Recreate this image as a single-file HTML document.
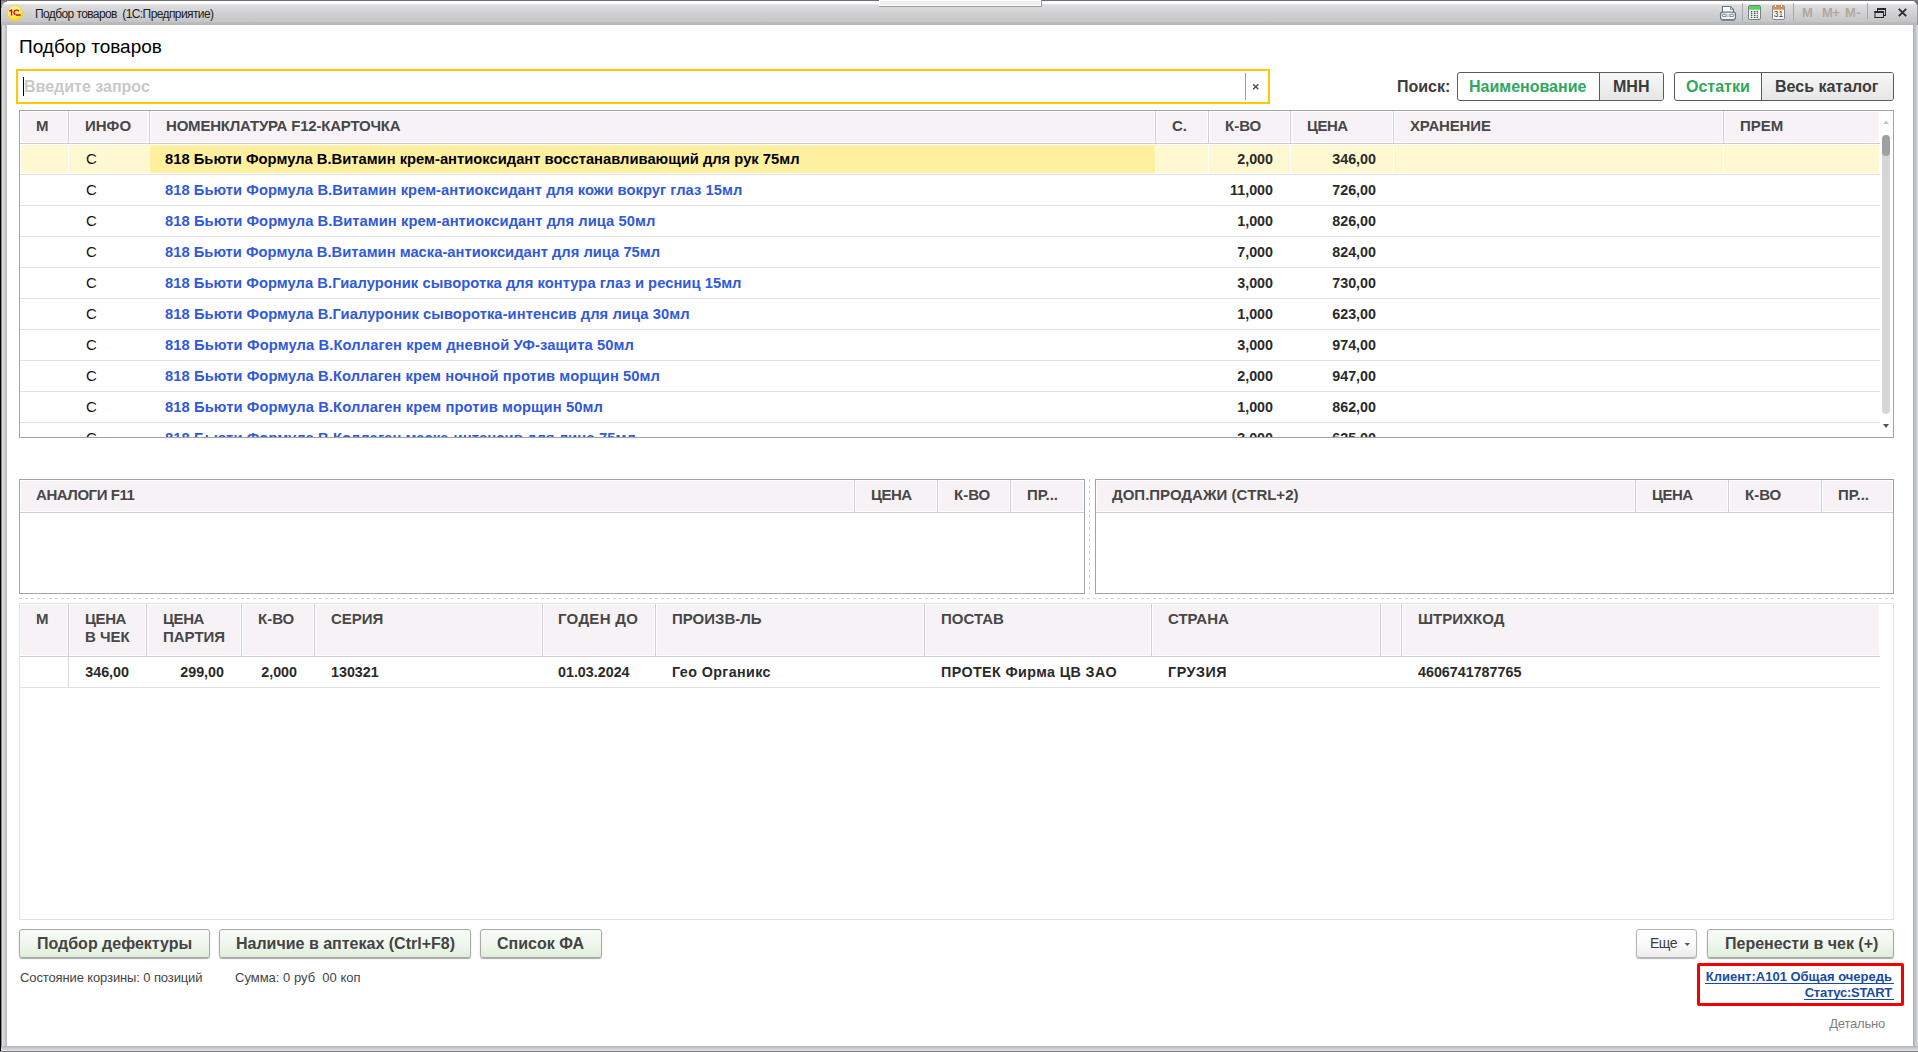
<!DOCTYPE html>
<html><head><meta charset="utf-8"><style>
html,body{margin:0;padding:0;width:1918px;height:1052px;overflow:hidden;background:#fff;position:relative}
.t{position:absolute;white-space:pre;font-family:"Liberation Sans",sans-serif}
</style></head><body>
<div style='position:absolute;left:0px;top:0px;width:1918px;height:25px;background:linear-gradient(#ffffff 0px,#ffffff 4px,#e6e6e8 4px,#dcdcde 6px,#d6d6d8 10px,#d0d0d2 14px,#cbcbcd 18px,#c6c6c8 22px,#b9bcbe 22px,#b8bbbd 25px);'></div><div style='position:absolute;left:0px;top:0px;width:1918px;height:1px;background:#6e6c70;'></div><div style='position:absolute;left:0px;top:0px;width:1px;height:1052px;background:#000;'></div><div style='position:absolute;left:1px;top:25px;width:6px;height:1021px;background:linear-gradient(90deg,#8a8a8a 0,#8a8a8a 1px,#e0e0e0 1px,#e0e0e0 2px,#d4d2d6 2px,#d4d2d6 4px,#c4c6cc 4px,#bcbcbc 6px);'></div><div style='position:absolute;left:1913px;top:25px;width:5px;height:1021px;background:linear-gradient(90deg,#a8abb0 0,#bfc2c6 2px,#d2d4d8 4px,#e0e2e4 5px);'></div><div style='position:absolute;left:1px;top:1046px;width:1917px;height:5px;background:linear-gradient(#b4b4b8 0,#c4c8cc 2px,#d8dadc 4px,#e4e4e4 5px);'></div><div style='position:absolute;left:0px;top:1051px;width:1918px;height:1px;background:#7a787c;'></div><div style='position:absolute;left:879px;top:0px;width:163px;height:7px;background:#fff;'></div><div style='position:absolute;left:880px;top:1px;width:160px;height:4px;background:#eeeeee;'></div><div style='position:absolute;left:1041px;top:0px;width:1px;height:7px;background:#9c9c9c;'></div><div style='position:absolute;left:879px;top:6px;width:163px;height:1px;background:#9c9c9c;'></div><div class=t style='left:35px;top:8px;font-size:12px;line-height:12px;font-weight:normal;color:#1a1a1a;letter-spacing:-0.6px;'>Подбор товаров  (1С:Предприятие)</div><svg style='position:absolute;left:0;top:0' width='8' height='8'><path d='M1 1 L7 1 L7 2 Q3 2 2 6 L2 8 L1 8 Z' fill='#8a8a8c'/><rect x='1' y='1' width='2' height='2' fill='#9a9a9c'/></svg><svg style='position:absolute;left:6px;top:4px' width='18' height='18' viewBox='0 0 18 18'>
<defs><radialGradient id='lg' cx='0.45' cy='0.35' r='0.65'><stop offset='0' stop-color='#fffbd0'/><stop offset='0.55' stop-color='#fff06a'/><stop offset='1' stop-color='#f8d400'/></radialGradient></defs>
<circle cx='9' cy='9' r='7.8' fill='url(#lg)' stroke='#e8cc50' stroke-width='0.6'/>
<path d='M3.2 6.8 L5.4 5.2 L6.3 5.2 L6.3 11.6 L4.8 11.6 L4.8 7.2 L3.6 7.9 Z' fill='#e00000'/>
<path d='M11.2 5.4 C9 5.2 7.2 6.4 7.3 8.4 C7.4 10 8.3 10.8 9.2 11.1 L9.8 9.9 C9.0 9.6 8.7 9.0 8.7 8.3 C8.7 7.2 9.7 6.6 11.0 6.7 C11.6 6.8 12.0 7.1 12.2 7.5 L13.4 7.0 C13.0 6.0 12.2 5.5 11.2 5.4 Z' fill='#e00000'/>
<path d='M9.8 10.3 L14.6 10.3 L14.6 11.7 L9.6 11.7 Z' fill='#e00000'/>
</svg><svg style='position:absolute;left:1718px;top:4px' width='20' height='18' viewBox='0 0 20 18'>
<path d='M4.5 8.5 L4.5 2.5 L12.5 2.5 L15.5 5.5 L15.5 8.5' fill='#fff' stroke='#66768a' stroke-width='1.1'/>
<path d='M12.5 2.5 L12.5 5.5 L15.5 5.5 Z' fill='#e4e8ee' stroke='#66768a' stroke-width='0.8'/>
<rect x='2.5' y='8.2' width='15' height='7.3' rx='2.3' fill='#f2f4f6' stroke='#66768a' stroke-width='1.2'/>
<rect x='4.2' y='10.3' width='4' height='2.2' rx='1' fill='#fff' stroke='#66768a' stroke-width='0.9'/>
<rect x='11.8' y='10.3' width='4' height='2.2' rx='1' fill='#fff' stroke='#66768a' stroke-width='0.9'/>
<rect x='8.2' y='11' width='3.6' height='1.6' fill='#fff' stroke='#8a96a4' stroke-width='0.6'/>
<path d='M3.5 16.3 L16.5 16.3' stroke='#7a8898' stroke-width='1.4'/>
</svg><div style='position:absolute;left:1742px;top:3px;width:1px;height:18px;background:#a8a8ac;'></div><svg style='position:absolute;left:1747px;top:4px' width='15' height='17' viewBox='0 0 15 17'>
<rect x='1.5' y='1.5' width='12' height='14' rx='1.5' fill='#f2f6f6' stroke='#6c8484' stroke-width='1'/>
<rect x='2' y='2' width='11' height='3.7' fill='#52d552'/>
<g fill='#454545'>
<rect x='3.9' y='7' width='1.3' height='1.2'/><rect x='6.9' y='7' width='1.3' height='1.2'/>
<rect x='3.9' y='8.7' width='1.3' height='1.2'/><rect x='6.9' y='8.7' width='1.3' height='1.2'/><rect x='9.7' y='8.9' width='1.1' height='1'/>
<rect x='3.9' y='10.7' width='1.3' height='1.2'/><rect x='6.9' y='10.7' width='1.3' height='1.2'/><rect x='9.7' y='10.8' width='1.1' height='1.1'/>
<rect x='3.9' y='12.8' width='1.3' height='1.2'/><rect x='6.9' y='12.8' width='1.3' height='1.2'/><rect x='9.7' y='12.5' width='1.1' height='1.6'/>
</g>
<g fill='#9aa'><rect x='5.2' y='7.2' width='0.8' height='0.8'/><rect x='8.2' y='7.2' width='0.8' height='0.8'/><rect x='5.2' y='8.9' width='0.8' height='0.8'/><rect x='8.2' y='8.9' width='0.8' height='0.8'/><rect x='5.2' y='10.9' width='0.8' height='0.8'/><rect x='8.2' y='10.9' width='0.8' height='0.8'/><rect x='5.2' y='13' width='0.8' height='0.8'/><rect x='8.2' y='13' width='0.8' height='0.8'/></g>
<rect x='9.6' y='6.6' width='1.3' height='2' rx='0.5' fill='#f01818'/>
</svg><svg style='position:absolute;left:1771px;top:4px' width='15' height='17' viewBox='0 0 15 17'>
<rect x='1.5' y='1.5' width='12' height='14' rx='1.5' fill='#fafbfc' stroke='#7a8898' stroke-width='1'/>
<path d='M1.5 5.8 L1.5 3 Q1.5 1.2 3 1.2 L12 1.2 Q13.5 1.2 13.5 3 L13.5 5.8 Z' fill='#cf925e'/>
<rect x='4' y='1' width='1' height='2' fill='#fff'/><rect x='10' y='1' width='1' height='2' fill='#fff'/>
<text x='7.5' y='13.2' font-family='Liberation Sans' font-size='8.4' text-anchor='middle' fill='#3a3a3a'>31</text>
</svg><div style='position:absolute;left:1793px;top:3px;width:1px;height:18px;background:#a8a8ac;'></div><div class=t style='left:1802px;top:6px;font-size:13px;line-height:13px;font-weight:bold;color:#b4a89c;letter-spacing:-0.3px;'>M</div><div class=t style='left:1822px;top:6px;font-size:13px;line-height:13px;font-weight:bold;color:#b4a89c;letter-spacing:-0.6px;'>M+</div><div class=t style='left:1845px;top:6px;font-size:13px;line-height:13px;font-weight:bold;color:#b4a89c;letter-spacing:0.4px;'>M-</div><div style='position:absolute;left:1867px;top:3px;width:1px;height:16px;background:#a8a8ac;'></div><svg style='position:absolute;left:1874px;top:7px' width='13' height='12' viewBox='0 0 13 12'>
<g fill='#262626'>
<rect x='3' y='1' width='9' height='2'/><rect x='11' y='1' width='1' height='8'/><rect x='3' y='1' width='1' height='3'/><rect x='10' y='8' width='2' height='1'/>
<rect x='0.5' y='4' width='9.5' height='2'/><rect x='0.5' y='4' width='1' height='7'/><rect x='9' y='4' width='1' height='7'/><rect x='0.5' y='10' width='9.5' height='1'/>
</g>
</svg><svg style='position:absolute;left:1896px;top:6px' width='13' height='13' viewBox='0 0 13 13'>
<path d='M2.8 2.8 L10.2 10.2 M10.2 2.8 L2.8 10.2' stroke='#2e2e2e' stroke-width='1.9'/>
</svg><svg style='position:absolute;left:1908px;top:0' width='10' height='25'><path d='M5 0 L10 0 L10 6 Z' fill='#7a787c'/><rect x='9' y='5' width='1' height='20' fill='#9a9a9e'/></svg><div style='position:absolute;left:7px;top:25px;width:1906px;height:1021px;background:#fff;'></div><div class=t style='left:19px;top:37px;font-size:19px;line-height:19px;font-weight:normal;color:#000;'>Подбор товаров</div><div style='position:absolute;left:16px;top:69px;width:1254px;height:35px;border:2px solid #ffc800;box-sizing:border-box;background:#fff;'></div><div style='position:absolute;left:23px;top:77px;width:1px;height:19px;background:#000;'></div><div class=t style='left:24px;top:79px;font-size:16px;line-height:16px;font-weight:bold;color:#c8c8c8;'>Введите запрос</div><div style='position:absolute;left:1245px;top:73px;width:1px;height:27px;background:#9c9c9c;'></div><svg style='position:absolute;left:1252px;top:83px' width='8' height='8'><path d='M1.2 1.2 L6.3 6.3 M6.3 1.2 L1.2 6.3' stroke='#4a4a4a' stroke-width='1.3'/></svg><div class=t style='left:1397px;top:79px;font-size:16px;line-height:16px;font-weight:bold;color:#3c3c3c;'>Поиск:</div><div style='position:absolute;left:1457px;top:72px;width:207px;height:29px;border:1px solid #5a5a5a;border-radius:3px;box-sizing:border-box;background:#fff;overflow:hidden;'></div><div style='position:absolute;left:1600px;top:73px;width:63px;height:27px;background:linear-gradient(#f7f7f7,#e6e6e6);border-radius:0 2px 2px 0;'></div><div style='position:absolute;left:1599px;top:73px;width:1px;height:27px;background:#5a5a5a;'></div><div class=t style='left:1469px;top:79px;font-size:16px;line-height:16px;font-weight:bold;color:#2fa75e;'>Наименование</div><div class=t style='left:1613px;top:79px;font-size:16px;line-height:16px;font-weight:bold;color:#3c3c3c;'>МНН</div><div style='position:absolute;left:1674px;top:72px;width:220px;height:29px;border:1px solid #5a5a5a;border-radius:3px;box-sizing:border-box;background:#fff;'></div><div style='position:absolute;left:1762px;top:73px;width:131px;height:27px;background:linear-gradient(#f7f7f7,#e6e6e6);border-radius:0 2px 2px 0;'></div><div style='position:absolute;left:1761px;top:73px;width:1px;height:27px;background:#5a5a5a;'></div><div class=t style='left:1686px;top:79px;font-size:16px;line-height:16px;font-weight:bold;color:#2fa75e;'>Остатки</div><div class=t style='left:1775px;top:79px;font-size:16px;line-height:16px;font-weight:bold;color:#3c3c3c;'>Весь каталог</div><div style='position:absolute;left:19px;top:110px;width:1875px;height:328px;border:1px solid #a3a3a3;box-sizing:border-box;background:#fff;'></div><div style='position:absolute;left:21px;top:112px;width:1858px;height:30px;background:#f6f2f6;'></div><div style='position:absolute;left:20px;top:143px;width:1860px;height:1px;background:#cdcdcd;'></div><div style='position:absolute;left:67px;top:112px;width:3px;height:30px;background:#fff;'></div><div style='position:absolute;left:68px;top:111px;width:1px;height:32px;background:#cfcfcf;'></div><div style='position:absolute;left:148px;top:112px;width:3px;height:30px;background:#fff;'></div><div style='position:absolute;left:149px;top:111px;width:1px;height:32px;background:#cfcfcf;'></div><div style='position:absolute;left:1154px;top:112px;width:3px;height:30px;background:#fff;'></div><div style='position:absolute;left:1155px;top:111px;width:1px;height:32px;background:#cfcfcf;'></div><div style='position:absolute;left:1207px;top:112px;width:3px;height:30px;background:#fff;'></div><div style='position:absolute;left:1208px;top:111px;width:1px;height:32px;background:#cfcfcf;'></div><div style='position:absolute;left:1289px;top:112px;width:3px;height:30px;background:#fff;'></div><div style='position:absolute;left:1290px;top:111px;width:1px;height:32px;background:#cfcfcf;'></div><div style='position:absolute;left:1392px;top:112px;width:3px;height:30px;background:#fff;'></div><div style='position:absolute;left:1393px;top:111px;width:1px;height:32px;background:#cfcfcf;'></div><div style='position:absolute;left:1722px;top:112px;width:3px;height:30px;background:#fff;'></div><div style='position:absolute;left:1723px;top:111px;width:1px;height:32px;background:#cfcfcf;'></div><div class=t style='left:36px;top:118px;font-size:15px;line-height:15px;font-weight:bold;color:#474747;'>М</div><div class=t style='left:85px;top:118px;font-size:15px;line-height:15px;font-weight:bold;color:#474747;'>ИНФО</div><div class=t style='left:166px;top:118px;font-size:15px;line-height:15px;font-weight:bold;color:#474747;letter-spacing:-0.2px;'>НОМЕНКЛАТУРА F12-КАРТОЧКА</div><div class=t style='left:1172px;top:118px;font-size:15px;line-height:15px;font-weight:bold;color:#474747;'>С.</div><div class=t style='left:1225px;top:118px;font-size:15px;line-height:15px;font-weight:bold;color:#474747;'>К-ВО</div><div class=t style='left:1307px;top:118px;font-size:15px;line-height:15px;font-weight:bold;color:#474747;letter-spacing:-0.5px;'>ЦЕНА</div><div class=t style='left:1410px;top:118px;font-size:15px;line-height:15px;font-weight:bold;color:#474747;letter-spacing:-0.15px;'>ХРАНЕНИЕ</div><div class=t style='left:1740px;top:118px;font-size:15px;line-height:15px;font-weight:bold;color:#474747;'>ПРЕМ</div><div style='position:absolute;left:21px;top:145px;width:47px;height:28px;background:#fff8d0;'></div><div style='position:absolute;left:69px;top:145px;width:80px;height:28px;background:#fff8d0;'></div><div style='position:absolute;left:150px;top:145px;width:1005px;height:28px;background:#fff0a0;'></div><div style='position:absolute;left:1156px;top:145px;width:52px;height:28px;background:#fff8d0;'></div><div style='position:absolute;left:1209px;top:145px;width:81px;height:28px;background:#fff8d0;'></div><div style='position:absolute;left:1291px;top:145px;width:102px;height:28px;background:#fff8d0;'></div><div style='position:absolute;left:1394px;top:145px;width:329px;height:28px;background:#fff8d0;'></div><div style='position:absolute;left:1724px;top:145px;width:155px;height:28px;background:#fff8d0;'></div><div style='position:absolute;left:0px;top:144px;width:1918px;height:293px;overflow:hidden'><div style='position:absolute;left:20px;top:30px;width:1860px;height:1px;background:#e2e2e2;'></div><div class=t style='left:86px;top:7px;font-size:15px;line-height:15px;font-weight:normal;color:#111;'>С</div><div class=t style='left:165px;top:8px;font-size:14.75px;line-height:14.75px;font-weight:bold;color:#000;letter-spacing:0px;'>818 Бьюти Формула В.Витамин крем-антиоксидант восстанавливающий для рук 75мл</div><div class=t style='right:645px;top:8px;font-size:14.3px;line-height:14.3px;font-weight:bold;color:#2a2a2a;'>2,000</div><div class=t style='right:542px;top:8px;font-size:14.3px;line-height:14.3px;font-weight:bold;color:#2a2a2a;'>346,00</div><div style='position:absolute;left:20px;top:61px;width:1860px;height:1px;background:#e2e2e2;'></div><div class=t style='left:86px;top:38px;font-size:15px;line-height:15px;font-weight:normal;color:#111;'>С</div><div class=t style='left:165px;top:39px;font-size:14.75px;line-height:14.75px;font-weight:bold;color:#3059dc;letter-spacing:0.035px;'>818 Бьюти Формула В.Витамин крем-антиоксидант для кожи вокруг глаз 15мл</div><div class=t style='right:645px;top:39px;font-size:14.3px;line-height:14.3px;font-weight:bold;color:#2a2a2a;'>11,000</div><div class=t style='right:542px;top:39px;font-size:14.3px;line-height:14.3px;font-weight:bold;color:#2a2a2a;'>726,00</div><div style='position:absolute;left:20px;top:92px;width:1860px;height:1px;background:#e2e2e2;'></div><div class=t style='left:86px;top:69px;font-size:15px;line-height:15px;font-weight:normal;color:#111;'>С</div><div class=t style='left:165px;top:70px;font-size:14.75px;line-height:14.75px;font-weight:bold;color:#3059dc;letter-spacing:0.045px;'>818 Бьюти Формула В.Витамин крем-антиоксидант для лица 50мл</div><div class=t style='right:645px;top:70px;font-size:14.3px;line-height:14.3px;font-weight:bold;color:#2a2a2a;'>1,000</div><div class=t style='right:542px;top:70px;font-size:14.3px;line-height:14.3px;font-weight:bold;color:#2a2a2a;'>826,00</div><div style='position:absolute;left:20px;top:123px;width:1860px;height:1px;background:#e2e2e2;'></div><div class=t style='left:86px;top:100px;font-size:15px;line-height:15px;font-weight:normal;color:#111;'>С</div><div class=t style='left:165px;top:101px;font-size:14.75px;line-height:14.75px;font-weight:bold;color:#3059dc;letter-spacing:0px;'>818 Бьюти Формула В.Витамин маска-антиоксидант для лица 75мл</div><div class=t style='right:645px;top:101px;font-size:14.3px;line-height:14.3px;font-weight:bold;color:#2a2a2a;'>7,000</div><div class=t style='right:542px;top:101px;font-size:14.3px;line-height:14.3px;font-weight:bold;color:#2a2a2a;'>824,00</div><div style='position:absolute;left:20px;top:154px;width:1860px;height:1px;background:#e2e2e2;'></div><div class=t style='left:86px;top:131px;font-size:15px;line-height:15px;font-weight:normal;color:#111;'>С</div><div class=t style='left:165px;top:132px;font-size:14.75px;line-height:14.75px;font-weight:bold;color:#3059dc;letter-spacing:0.03px;'>818 Бьюти Формула В.Гиалуроник сыворотка для контура глаз и ресниц 15мл</div><div class=t style='right:645px;top:132px;font-size:14.3px;line-height:14.3px;font-weight:bold;color:#2a2a2a;'>3,000</div><div class=t style='right:542px;top:132px;font-size:14.3px;line-height:14.3px;font-weight:bold;color:#2a2a2a;'>730,00</div><div style='position:absolute;left:20px;top:185px;width:1860px;height:1px;background:#e2e2e2;'></div><div class=t style='left:86px;top:162px;font-size:15px;line-height:15px;font-weight:normal;color:#111;'>С</div><div class=t style='left:165px;top:163px;font-size:14.75px;line-height:14.75px;font-weight:bold;color:#3059dc;letter-spacing:0.05px;'>818 Бьюти Формула В.Гиалуроник сыворотка-интенсив для лица 30мл</div><div class=t style='right:645px;top:163px;font-size:14.3px;line-height:14.3px;font-weight:bold;color:#2a2a2a;'>1,000</div><div class=t style='right:542px;top:163px;font-size:14.3px;line-height:14.3px;font-weight:bold;color:#2a2a2a;'>623,00</div><div style='position:absolute;left:20px;top:216px;width:1860px;height:1px;background:#e2e2e2;'></div><div class=t style='left:86px;top:193px;font-size:15px;line-height:15px;font-weight:normal;color:#111;'>С</div><div class=t style='left:165px;top:194px;font-size:14.75px;line-height:14.75px;font-weight:bold;color:#3059dc;letter-spacing:0.095px;'>818 Бьюти Формула В.Коллаген крем дневной УФ-защита 50мл</div><div class=t style='right:645px;top:194px;font-size:14.3px;line-height:14.3px;font-weight:bold;color:#2a2a2a;'>3,000</div><div class=t style='right:542px;top:194px;font-size:14.3px;line-height:14.3px;font-weight:bold;color:#2a2a2a;'>974,00</div><div style='position:absolute;left:20px;top:247px;width:1860px;height:1px;background:#e2e2e2;'></div><div class=t style='left:86px;top:224px;font-size:15px;line-height:15px;font-weight:normal;color:#111;'>С</div><div class=t style='left:165px;top:225px;font-size:14.75px;line-height:14.75px;font-weight:bold;color:#3059dc;letter-spacing:0.067px;'>818 Бьюти Формула В.Коллаген крем ночной против морщин 50мл</div><div class=t style='right:645px;top:225px;font-size:14.3px;line-height:14.3px;font-weight:bold;color:#2a2a2a;'>2,000</div><div class=t style='right:542px;top:225px;font-size:14.3px;line-height:14.3px;font-weight:bold;color:#2a2a2a;'>947,00</div><div style='position:absolute;left:20px;top:278px;width:1860px;height:1px;background:#e2e2e2;'></div><div class=t style='left:86px;top:255px;font-size:15px;line-height:15px;font-weight:normal;color:#111;'>С</div><div class=t style='left:165px;top:256px;font-size:14.75px;line-height:14.75px;font-weight:bold;color:#3059dc;letter-spacing:0.077px;'>818 Бьюти Формула В.Коллаген крем против морщин 50мл</div><div class=t style='right:645px;top:256px;font-size:14.3px;line-height:14.3px;font-weight:bold;color:#2a2a2a;'>1,000</div><div class=t style='right:542px;top:256px;font-size:14.3px;line-height:14.3px;font-weight:bold;color:#2a2a2a;'>862,00</div><div style='position:absolute;left:20px;top:309px;width:1860px;height:1px;background:#e2e2e2;'></div><div class=t style='left:86px;top:286px;font-size:15px;line-height:15px;font-weight:normal;color:#111;'>С</div><div class=t style='left:165px;top:287px;font-size:14.75px;line-height:14.75px;font-weight:bold;color:#3059dc;letter-spacing:0.07px;'>818 Бьюти Формула В.Коллаген маска-интенсив для лица 75мл</div><div class=t style='right:645px;top:287px;font-size:14.3px;line-height:14.3px;font-weight:bold;color:#2a2a2a;'>3,000</div><div class=t style='right:542px;top:287px;font-size:14.3px;line-height:14.3px;font-weight:bold;color:#2a2a2a;'>625,00</div></div><div style='position:absolute;left:1882px;top:135px;width:8px;height:279px;background:#d6d6d6;border-radius:4px;'></div><div style='position:absolute;left:1882px;top:135px;width:8px;height:21px;background:#a0a0a4;border-radius:4px;'></div><svg style='position:absolute;left:1882px;top:118px' width='8' height='8'><path d='M1 6 L4 2.5 L7 6 Z' fill='#c4c4c4'/></svg><svg style='position:absolute;left:1882px;top:422px' width='8' height='8'><path d='M1 2 L7 2 L4 6 Z' fill='#555'/></svg><div style='position:absolute;left:19px;top:479px;width:1066px;height:115px;border:1px solid #a3a3a3;box-sizing:border-box;background:#fff;'></div><div style='position:absolute;left:21px;top:481px;width:1062px;height:30px;background:#f6f2f6;'></div><div style='position:absolute;left:20px;top:512px;width:1064px;height:1px;background:#cfcfcf;'></div><div style='position:absolute;left:853px;top:481px;width:3px;height:30px;background:#fff;'></div><div style='position:absolute;left:854px;top:480px;width:1px;height:32px;background:#cfcfcf;'></div><div style='position:absolute;left:936px;top:481px;width:3px;height:30px;background:#fff;'></div><div style='position:absolute;left:937px;top:480px;width:1px;height:32px;background:#cfcfcf;'></div><div style='position:absolute;left:1009px;top:481px;width:3px;height:30px;background:#fff;'></div><div style='position:absolute;left:1010px;top:480px;width:1px;height:32px;background:#cfcfcf;'></div><div class=t style='left:36px;top:487px;font-size:15px;line-height:15px;font-weight:bold;color:#474747;letter-spacing:-0.45px;'>АНАЛОГИ F11</div><div class=t style='left:871px;top:487px;font-size:15px;line-height:15px;font-weight:bold;color:#474747;letter-spacing:-0.5px;'>ЦЕНА</div><div class=t style='left:954px;top:487px;font-size:15px;line-height:15px;font-weight:bold;color:#474747;letter-spacing:0px;'>К-ВО</div><div class=t style='left:1027px;top:487px;font-size:15px;line-height:15px;font-weight:bold;color:#474747;letter-spacing:0px;'>ПР...</div><div style='position:absolute;left:1095px;top:479px;width:799px;height:115px;border:1px solid #a3a3a3;box-sizing:border-box;background:#fff;'></div><div style='position:absolute;left:1097px;top:481px;width:795px;height:30px;background:#f6f2f6;'></div><div style='position:absolute;left:1096px;top:512px;width:797px;height:1px;background:#cfcfcf;'></div><div style='position:absolute;left:1634px;top:481px;width:3px;height:30px;background:#fff;'></div><div style='position:absolute;left:1635px;top:480px;width:1px;height:32px;background:#cfcfcf;'></div><div style='position:absolute;left:1727px;top:481px;width:3px;height:30px;background:#fff;'></div><div style='position:absolute;left:1728px;top:480px;width:1px;height:32px;background:#cfcfcf;'></div><div style='position:absolute;left:1820px;top:481px;width:3px;height:30px;background:#fff;'></div><div style='position:absolute;left:1821px;top:480px;width:1px;height:32px;background:#cfcfcf;'></div><div class=t style='left:1112px;top:487px;font-size:15px;line-height:15px;font-weight:bold;color:#474747;letter-spacing:0px;'>ДОП.ПРОДАЖИ (CTRL+2)</div><div class=t style='left:1652px;top:487px;font-size:15px;line-height:15px;font-weight:bold;color:#474747;letter-spacing:-0.5px;'>ЦЕНА</div><div class=t style='left:1745px;top:487px;font-size:15px;line-height:15px;font-weight:bold;color:#474747;letter-spacing:0px;'>К-ВО</div><div class=t style='left:1838px;top:487px;font-size:15px;line-height:15px;font-weight:bold;color:#474747;letter-spacing:0px;'>ПР...</div><div style='position:absolute;left:1089px;top:479px;width:1px;height:115px;background:repeating-linear-gradient(#d0d0d0 0,#d0d0d0 3px,transparent 3px,transparent 6px)'></div><div style='position:absolute;left:19px;top:598px;width:1875px;height:1px;background:repeating-linear-gradient(90deg,#d0d0d0 0,#d0d0d0 3px,transparent 3px,transparent 6px)'></div><div style='position:absolute;left:19px;top:603px;width:1875px;height:317px;border:1px solid #e2e2e2;box-sizing:border-box;background:#fff;'></div><div style='position:absolute;left:21px;top:605px;width:1858px;height:50px;background:#f6f2f6;'></div><div style='position:absolute;left:20px;top:656px;width:1860px;height:1px;background:#cfcfcf;'></div><div style='position:absolute;left:67px;top:605px;width:3px;height:50px;background:#fff;'></div><div style='position:absolute;left:68px;top:604px;width:1px;height:52px;background:#cfcfcf;'></div><div style='position:absolute;left:145px;top:605px;width:3px;height:50px;background:#fff;'></div><div style='position:absolute;left:146px;top:604px;width:1px;height:52px;background:#cfcfcf;'></div><div style='position:absolute;left:240px;top:605px;width:3px;height:50px;background:#fff;'></div><div style='position:absolute;left:241px;top:604px;width:1px;height:52px;background:#cfcfcf;'></div><div style='position:absolute;left:313px;top:605px;width:3px;height:50px;background:#fff;'></div><div style='position:absolute;left:314px;top:604px;width:1px;height:52px;background:#cfcfcf;'></div><div style='position:absolute;left:541px;top:605px;width:3px;height:50px;background:#fff;'></div><div style='position:absolute;left:542px;top:604px;width:1px;height:52px;background:#cfcfcf;'></div><div style='position:absolute;left:654px;top:605px;width:3px;height:50px;background:#fff;'></div><div style='position:absolute;left:655px;top:604px;width:1px;height:52px;background:#cfcfcf;'></div><div style='position:absolute;left:923px;top:605px;width:3px;height:50px;background:#fff;'></div><div style='position:absolute;left:924px;top:604px;width:1px;height:52px;background:#cfcfcf;'></div><div style='position:absolute;left:1150px;top:605px;width:3px;height:50px;background:#fff;'></div><div style='position:absolute;left:1151px;top:604px;width:1px;height:52px;background:#cfcfcf;'></div><div style='position:absolute;left:1379px;top:605px;width:3px;height:50px;background:#fff;'></div><div style='position:absolute;left:1380px;top:604px;width:1px;height:52px;background:#cfcfcf;'></div><div style='position:absolute;left:1400px;top:605px;width:3px;height:50px;background:#fff;'></div><div style='position:absolute;left:1401px;top:604px;width:1px;height:52px;background:#cfcfcf;'></div><div style='position:absolute;left:68px;top:657px;width:1px;height:31px;background:#dcdcdc;'></div><div style='position:absolute;left:20px;top:687px;width:1860px;height:1px;background:#e2e2e2;'></div><div class=t style='left:36px;top:611px;font-size:15px;line-height:15px;font-weight:bold;color:#474747;letter-spacing:0px;'>М</div><div class=t style='left:85px;top:611px;font-size:15px;line-height:15px;font-weight:bold;color:#474747;letter-spacing:-0.4px;'>ЦЕНА</div><div class=t style='left:163px;top:611px;font-size:15px;line-height:15px;font-weight:bold;color:#474747;letter-spacing:-0.4px;'>ЦЕНА</div><div class=t style='left:258px;top:611px;font-size:15px;line-height:15px;font-weight:bold;color:#474747;letter-spacing:0px;'>К-ВО</div><div class=t style='left:331px;top:611px;font-size:15px;line-height:15px;font-weight:bold;color:#474747;letter-spacing:0px;'>СЕРИЯ</div><div class=t style='left:558px;top:611px;font-size:15px;line-height:15px;font-weight:bold;color:#474747;letter-spacing:0.3px;'>ГОДЕН ДО</div><div class=t style='left:672px;top:611px;font-size:15px;line-height:15px;font-weight:bold;color:#474747;letter-spacing:0px;'>ПРОИЗВ-ЛЬ</div><div class=t style='left:941px;top:611px;font-size:15px;line-height:15px;font-weight:bold;color:#474747;letter-spacing:0px;'>ПОСТАВ</div><div class=t style='left:1168px;top:611px;font-size:15px;line-height:15px;font-weight:bold;color:#474747;letter-spacing:0px;'>СТРАНА</div><div class=t style='left:1418px;top:611px;font-size:15px;line-height:15px;font-weight:bold;color:#474747;letter-spacing:0px;'>ШТРИХКОД</div><div class=t style='left:85px;top:629px;font-size:15px;line-height:15px;font-weight:bold;color:#474747;'>В ЧЕК</div><div class=t style='left:163px;top:629px;font-size:15px;line-height:15px;font-weight:bold;color:#474747;'>ПАРТИЯ</div><div class=t style='right:1789px;top:665px;font-size:14.3px;line-height:14.3px;font-weight:bold;color:#2a2a2a;'>346,00</div><div class=t style='right:1694px;top:665px;font-size:14.3px;line-height:14.3px;font-weight:bold;color:#2a2a2a;'>299,00</div><div class=t style='right:1621px;top:665px;font-size:14.3px;line-height:14.3px;font-weight:bold;color:#2a2a2a;'>2,000</div><div class=t style='left:331px;top:665px;font-size:14.3px;line-height:14.3px;font-weight:bold;color:#2a2a2a;'>130321</div><div class=t style='left:558px;top:665px;font-size:14.3px;line-height:14.3px;font-weight:bold;color:#2a2a2a;'>01.03.2024</div><div class=t style='left:672px;top:665px;font-size:14.3px;line-height:14.3px;font-weight:bold;color:#2a2a2a;letter-spacing:0.4px;'>Гео Органикс</div><div class=t style='left:941px;top:665px;font-size:14.3px;line-height:14.3px;font-weight:bold;color:#2a2a2a;letter-spacing:0.39px;'>ПРОТЕК Фирма ЦВ ЗАО</div><div class=t style='left:1168px;top:665px;font-size:14.3px;line-height:14.3px;font-weight:bold;color:#2a2a2a;letter-spacing:0.55px;'>ГРУЗИЯ</div><div class=t style='left:1418px;top:665px;font-size:14.3px;line-height:14.3px;font-weight:bold;color:#2a2a2a;'>4606741787765</div><div style='position:absolute;left:19px;top:929px;width:191px;height:29px;border:1px solid #a8a8a8;border-radius:3px;box-sizing:border-box;background:linear-gradient(#f7fcf6 0%,#f1f8ef 45%,#dfeedb 100%);box-shadow:0 1px 1px rgba(0,0,0,0.35);'></div><div class=t style='left:37px;top:936px;font-size:16px;line-height:16px;font-weight:bold;color:#444444;'>Подбор дефектуры</div><div style='position:absolute;left:219px;top:929px;width:252px;height:29px;border:1px solid #a8a8a8;border-radius:3px;box-sizing:border-box;background:linear-gradient(#f7fcf6 0%,#f1f8ef 45%,#dfeedb 100%);box-shadow:0 1px 1px rgba(0,0,0,0.35);'></div><div class=t style='left:236px;top:936px;font-size:16px;line-height:16px;font-weight:bold;color:#444444;'>Наличие в аптеках (Ctrl+F8)</div><div style='position:absolute;left:480px;top:929px;width:122px;height:29px;border:1px solid #a8a8a8;border-radius:3px;box-sizing:border-box;background:linear-gradient(#f7fcf6 0%,#f1f8ef 45%,#dfeedb 100%);box-shadow:0 1px 1px rgba(0,0,0,0.35);'></div><div class=t style='left:497px;top:936px;font-size:16px;line-height:16px;font-weight:bold;color:#444444;'>Список ФА</div><div style='position:absolute;left:1707px;top:929px;width:187px;height:29px;border:1px solid #a8a8a8;border-radius:3px;box-sizing:border-box;background:linear-gradient(#f7fcf6 0%,#f1f8ef 45%,#dfeedb 100%);box-shadow:0 1px 1px rgba(0,0,0,0.35);'></div><div class=t style='left:1725px;top:936px;font-size:16px;line-height:16px;font-weight:bold;color:#444444;'>Перенести в чек (+)</div><div style='position:absolute;left:1636px;top:929px;width:61px;height:29px;border:1px solid #b4b4b4;border-radius:3px;box-sizing:border-box;background:linear-gradient(#ffffff 0%,#fbfbfb 50%,#ececec 100%);box-shadow:0 1px 1px rgba(0,0,0,0.3);'></div><div class=t style='left:1650px;top:936px;font-size:14px;line-height:14px;font-weight:normal;color:#3c3c3c;letter-spacing:-0.5px;'>Еще</div><svg style='position:absolute;left:1684px;top:942px' width='7' height='5'><path d='M0.5 1 L6 1 L3.25 4 Z' fill='#555'/></svg><div class=t style='left:20px;top:971px;font-size:13px;line-height:13px;font-weight:normal;color:#444444;letter-spacing:-0.12px;'>Состояние корзины: 0 позиций</div><div class=t style='left:235px;top:971px;font-size:13px;line-height:13px;font-weight:normal;color:#444444;'>Сумма: 0 руб  00 коп</div><div style='position:absolute;left:1697px;top:963px;width:207px;height:43px;border:3px solid #f40000;border-radius:2px;box-sizing:border-box;'></div><div class=t style='right:26px;top:970px;font-size:13px;line-height:13px;font-weight:bold;color:#1a4aa2;'>Клиент:А101 Общая очередь</div><div class=t style='right:26px;top:986px;font-size:13px;line-height:13px;font-weight:bold;color:#1a4aa2;letter-spacing:-0.27px;'>Статус:START</div><div style='position:absolute;left:1705px;top:983px;width:189px;height:1px;background:#1a4aa2;'></div><div style='position:absolute;left:1804px;top:999px;width:90px;height:1px;background:#1a4aa2;'></div><div class=t style='right:33px;top:1017px;font-size:13px;line-height:13px;font-weight:normal;color:#808080;letter-spacing:-0.2px;'>Детально</div>
</body></html>
